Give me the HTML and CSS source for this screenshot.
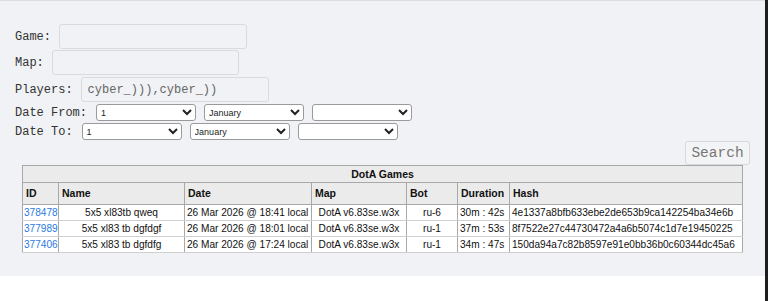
FILE: index.html
```html
<!DOCTYPE html>
<html>
<head>
<meta charset="utf-8">
<link rel="stylesheet" href="styles.css">
</head>
<body>
<div class="page">
  <div class="panel">
    <form class="search-form">
      <div class="row row-game">
        <label class="lbl">Game:</label>
        <input class="txt" type="text">
      </div>
      <div class="row row-map">
        <label class="lbl">Map:</label>
        <input class="txt" type="text">
      </div>
      <div class="row row-players">
        <label class="lbl">Players:</label>
        <input class="txt" type="text" value="cyber_))),cyber_))">
      </div>
      <div class="row row-date">
        <label class="lbl">Date From:</label>
        <select class="sel"><option>1</option></select>
        <select class="sel"><option>January</option></select>
        <select class="sel"><option></option></select>
      </div>
      <div class="row row-date">
        <label class="lbl">Date To:</label>
        <select class="sel"><option>1</option></select>
        <select class="sel"><option>January</option></select>
        <select class="sel"><option></option></select>
      </div>
      <div class="row row-submit">
        <button class="btn" type="button">Search</button>
      </div>
    </form>
    <table class="games">
      <colgroup>
        <col class="c-id"><col class="c-name"><col class="c-date"><col class="c-map"><col class="c-bot"><col class="c-dur"><col class="c-hash">
      </colgroup>
      <thead>
        <tr class="title"><th colspan="7">DotA Games</th></tr>
        <tr class="heads">
          <th>ID</th><th>Name</th><th>Date</th><th>Map</th><th>Bot</th><th>Duration</th><th>Hash</th>
        </tr>
      </thead>
      <tbody>
        <tr>
          <td class="id"><a href="#">378478</a></td>
          <td class="ctr">5x5 xl83tb qweq</td>
          <td>26 Mar 2026 @ 18:41 local</td>
          <td class="ctr">DotA v6.83se.w3x</td>
          <td class="ctr">ru-6</td>
          <td>30m : 42s</td>
          <td>4e1337a8bfb633ebe2de653b9ca142254ba34e6b</td>
        </tr>
        <tr>
          <td class="id"><a href="#">377989</a></td>
          <td class="ctr">5x5 xl83 tb dgfdgf</td>
          <td>26 Mar 2026 @ 18:01 local</td>
          <td class="ctr">DotA v6.83se.w3x</td>
          <td class="ctr">ru-1</td>
          <td>37m : 53s</td>
          <td>8f7522e27c44730472a4a6b5074c1d7e19450225</td>
        </tr>
        <tr>
          <td class="id"><a href="#">377406</a></td>
          <td class="ctr">5x5 xl83 tb dgfdfg</td>
          <td>26 Mar 2026 @ 17:24 local</td>
          <td class="ctr">DotA v6.83se.w3x</td>
          <td class="ctr">ru-1</td>
          <td>34m : 47s</td>
          <td>150da94a7c82b8597e91e0bb36b0c60344dc45a6</td>
        </tr>
      </tbody>
    </table>
  </div>
</div>
<div class="edge"></div>
</body>
</html>
```
FILE: styles.css
```css
html, body {
  margin: 0;
  padding: 0;
  height: 301px;
  overflow: hidden;
  background: #ffffff;
}
body {
  display: flex;
}
.page {
  flex: 1;
  background: #ffffff;
}
.edge {
  width: 3px;
  background: #1e1e1e;
}
.panel {
  background: #f0f2f5;
  border-top: 1px solid #dcdee2;
  padding: 23px 15px 23px 15px;
}
.search-form {
  display: flex;
  flex-direction: column;
}
.row {
  display: flex;
  align-items: center;
  gap: 8px;
}
.lbl {
  font-family: "Liberation Mono", "DejaVu Sans Mono", monospace;
  font-size: 12px;
  color: #333333;
  white-space: pre;
}
.txt {
  box-sizing: border-box;
  width: 188px;
  height: 25px;
  margin: 0;
  padding: 0 6px;
  border: 1px solid #d8dade;
  border-radius: 3px;
  background: #f0f2f5;
  font-family: "Liberation Mono", "DejaVu Sans Mono", monospace;
  font-size: 12px;
  color: #666666;
  outline: none;
}
.row-game { margin-bottom: 1px; }
.row-map { margin-bottom: 2px; }
.row-map .txt { width: 187px; }
.row-players { margin-bottom: 2px; }
.row-date { margin-bottom: 2px; gap: 8px; }
.row-date .lbl { margin-right: 1px; }
.sel {
  box-sizing: border-box;
  width: 100px;
  height: 17px;
  margin: 0;
  font-family: "Liberation Sans", Arial, sans-serif;
  font-size: 9px;
  color: #222222;
  background: #ffffff;
  border: 1px solid #9a9a9a;
  border-radius: 3px;
}
.row-submit {
  justify-content: flex-end;
  margin-top: -1px;
}
.btn {
  box-sizing: border-box;
  width: 65px;
  height: 24px;
  margin: 0;
  padding: 0;
  font-family: "Liberation Mono", "DejaVu Sans Mono", monospace;
  font-size: 14.5px;
  color: #777777;
  background: #f3f4f6;
  border: 1px solid #d6d8dc;
  border-radius: 3px;
}
.games {
  margin-left: 7px;
  width: 720px;
  table-layout: fixed;
  border-collapse: collapse;
  font-family: "Liberation Sans", Arial, sans-serif;
  font-size: 10.5px;
  color: #111111;
  background: #ffffff;
  border: 1px solid #a3a3a3;
}
.c-id { width: 36px; }
.c-name { width: 126px; }
.c-date { width: 127px; }
.c-map { width: 95px; }
.c-bot { width: 51px; }
.c-dur { width: 52px; }
.c-hash { width: 233px; }
.games th {
  background: #ebebeb;
  font-weight: bold;
  text-align: left;
  border: 1px solid #a8a8a8;
  line-height: 13px;
  white-space: nowrap;
  overflow: hidden;
}
.title th {
  text-align: center;
  padding: 1px 3px;
  height: 14px;
}
.heads th {
  padding: 4px 3px;
  height: 13px;
}
.games td {
  border-left: 1px solid #a8a8a8;
  border-right: 1px solid #a8a8a8;
  border-top: 1px solid #cfcfcf;
  border-bottom: 1px solid #cfcfcf;
  padding: 1px 2px;
  font-size: 10.1px;
  line-height: 13px;
  white-space: nowrap;
  overflow: hidden;
}
.games td.id {
  padding: 1px 0 1px 1px;
}
.games td.ctr {
  text-align: center;
}
.games a {
  color: #2a7ae2;
  text-decoration: none;
}
```
